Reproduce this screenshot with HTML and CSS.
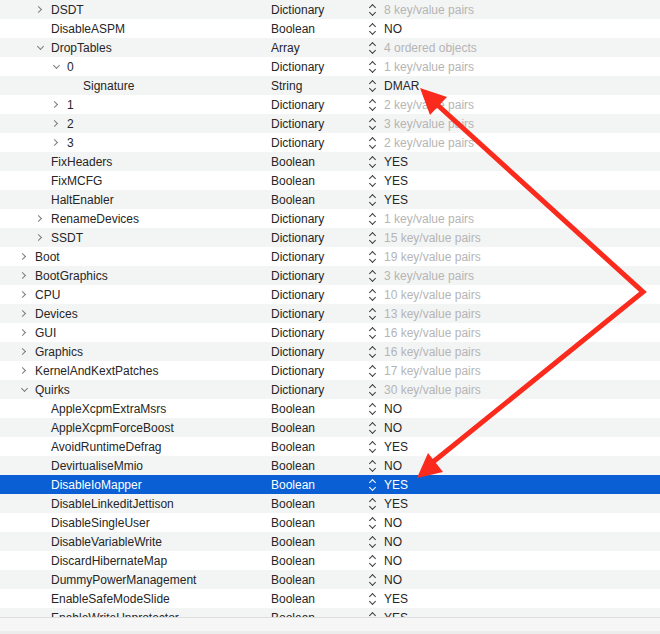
FILE: index.html
```html
<!DOCTYPE html>
<html lang="en">
<head>
  <meta charset="UTF-8" />
  <title>config.plist</title>
  <link rel="stylesheet" href="styles.css">
</head>
<body>
  <div class="editor">
    <div class="outline">
      <div class="row lvl2"><span class="key"><i class="tog closed"></i>DSDT</span><span class="type">Dictionary</span><span class="val dim"><i class="step"></i>8 key/value pairs</span></div>
      <div class="row lvl2"><span class="key"><i class="tog"></i>DisableASPM</span><span class="type">Boolean</span><span class="val"><i class="step"></i>NO</span></div>
      <div class="row lvl2"><span class="key"><i class="tog open"></i>DropTables</span><span class="type">Array</span><span class="val dim"><i class="step"></i>4 ordered objects</span></div>
      <div class="row lvl3"><span class="key"><i class="tog open"></i>0</span><span class="type">Dictionary</span><span class="val dim"><i class="step"></i>1 key/value pairs</span></div>
      <div class="row lvl4"><span class="key"><i class="tog"></i>Signature</span><span class="type">String</span><span class="val"><i class="step"></i>DMAR</span></div>
      <div class="row lvl3"><span class="key"><i class="tog closed"></i>1</span><span class="type">Dictionary</span><span class="val dim"><i class="step"></i>2 key/value pairs</span></div>
      <div class="row lvl3"><span class="key"><i class="tog closed"></i>2</span><span class="type">Dictionary</span><span class="val dim"><i class="step"></i>3 key/value pairs</span></div>
      <div class="row lvl3"><span class="key"><i class="tog closed"></i>3</span><span class="type">Dictionary</span><span class="val dim"><i class="step"></i>2 key/value pairs</span></div>
      <div class="row lvl2"><span class="key"><i class="tog"></i>FixHeaders</span><span class="type">Boolean</span><span class="val"><i class="step"></i>YES</span></div>
      <div class="row lvl2"><span class="key"><i class="tog"></i>FixMCFG</span><span class="type">Boolean</span><span class="val"><i class="step"></i>YES</span></div>
      <div class="row lvl2"><span class="key"><i class="tog"></i>HaltEnabler</span><span class="type">Boolean</span><span class="val"><i class="step"></i>YES</span></div>
      <div class="row lvl2"><span class="key"><i class="tog closed"></i>RenameDevices</span><span class="type">Dictionary</span><span class="val dim"><i class="step"></i>1 key/value pairs</span></div>
      <div class="row lvl2"><span class="key"><i class="tog closed"></i>SSDT</span><span class="type">Dictionary</span><span class="val dim"><i class="step"></i>15 key/value pairs</span></div>
      <div class="row lvl1"><span class="key"><i class="tog closed"></i>Boot</span><span class="type">Dictionary</span><span class="val dim"><i class="step"></i>19 key/value pairs</span></div>
      <div class="row lvl1"><span class="key"><i class="tog closed"></i>BootGraphics</span><span class="type">Dictionary</span><span class="val dim"><i class="step"></i>3 key/value pairs</span></div>
      <div class="row lvl1"><span class="key"><i class="tog closed"></i>CPU</span><span class="type">Dictionary</span><span class="val dim"><i class="step"></i>10 key/value pairs</span></div>
      <div class="row lvl1"><span class="key"><i class="tog closed"></i>Devices</span><span class="type">Dictionary</span><span class="val dim"><i class="step"></i>13 key/value pairs</span></div>
      <div class="row lvl1"><span class="key"><i class="tog closed"></i>GUI</span><span class="type">Dictionary</span><span class="val dim"><i class="step"></i>16 key/value pairs</span></div>
      <div class="row lvl1"><span class="key"><i class="tog closed"></i>Graphics</span><span class="type">Dictionary</span><span class="val dim"><i class="step"></i>16 key/value pairs</span></div>
      <div class="row lvl1"><span class="key"><i class="tog closed"></i>KernelAndKextPatches</span><span class="type">Dictionary</span><span class="val dim"><i class="step"></i>17 key/value pairs</span></div>
      <div class="row lvl1"><span class="key"><i class="tog open"></i>Quirks</span><span class="type">Dictionary</span><span class="val dim"><i class="step"></i>30 key/value pairs</span></div>
      <div class="row lvl2"><span class="key"><i class="tog"></i>AppleXcpmExtraMsrs</span><span class="type">Boolean</span><span class="val"><i class="step"></i>NO</span></div>
      <div class="row lvl2"><span class="key"><i class="tog"></i>AppleXcpmForceBoost</span><span class="type">Boolean</span><span class="val"><i class="step"></i>NO</span></div>
      <div class="row lvl2"><span class="key"><i class="tog"></i>AvoidRuntimeDefrag</span><span class="type">Boolean</span><span class="val"><i class="step"></i>YES</span></div>
      <div class="row lvl2"><span class="key"><i class="tog"></i>DevirtualiseMmio</span><span class="type">Boolean</span><span class="val"><i class="step"></i>NO</span></div>
      <div class="row lvl2 selected"><span class="key"><i class="tog"></i>DisableIoMapper</span><span class="type">Boolean</span><span class="val"><i class="step"></i>YES</span></div>
      <div class="row lvl2"><span class="key"><i class="tog"></i>DisableLinkeditJettison</span><span class="type">Boolean</span><span class="val"><i class="step"></i>YES</span></div>
      <div class="row lvl2"><span class="key"><i class="tog"></i>DisableSingleUser</span><span class="type">Boolean</span><span class="val"><i class="step"></i>NO</span></div>
      <div class="row lvl2"><span class="key"><i class="tog"></i>DisableVariableWrite</span><span class="type">Boolean</span><span class="val"><i class="step"></i>NO</span></div>
      <div class="row lvl2"><span class="key"><i class="tog"></i>DiscardHibernateMap</span><span class="type">Boolean</span><span class="val"><i class="step"></i>NO</span></div>
      <div class="row lvl2"><span class="key"><i class="tog"></i>DummyPowerManagement</span><span class="type">Boolean</span><span class="val"><i class="step"></i>NO</span></div>
      <div class="row lvl2"><span class="key"><i class="tog"></i>EnableSafeModeSlide</span><span class="type">Boolean</span><span class="val"><i class="step"></i>YES</span></div>
      <div class="row lvl2"><span class="key"><i class="tog"></i>EnableWriteUnprotector</span><span class="type">Boolean</span><span class="val"><i class="step"></i>YES</span></div>
    </div>
    <div class="statusbar"></div>

    <!-- annotation arrows drawn over the list -->
    <svg class="marks" width="660" height="634" viewBox="0 0 660 634">
      <polyline points="432,100 643,292 428,466" fill="none" stroke="#fa2b1d" stroke-width="5" stroke-linejoin="miter"/>
      <polygon points="420,88 447,97 430,115" fill="#fa2b1d"/>
      <polygon points="417,478 428,453 443,472" fill="#fa2b1d"/>
    </svg>
  </div>
</body>
</html>
```

FILE: styles.css
```css
body {
  margin: 0;
  font-family: "Liberation Sans", Arial, sans-serif;
  font-size: 12px;
  color: #262626;
  background-color: #ffffff;
  overflow: hidden;
}

.editor {
  position: relative;
  width: 660px;
  height: 634px;
  display: flex;
  flex-direction: column;
}

.outline {
  height: 617px;
  overflow: hidden;
}

.row {
  display: grid;
  grid-template-columns: 271px 97px 1fr;
  height: 19px;
  line-height: 18px;
  white-space: nowrap;
}

.row > span {
  padding-top: 1px;
}

.row:nth-child(odd) {
  background-color: #f3f4f4;
}

.row .key {
  display: flex;
  align-items: center;
}

.lvl1 .key { padding-left: 19px; }
.lvl2 .key { padding-left: 35px; }
.lvl3 .key { padding-left: 51px; }
.lvl4 .key { padding-left: 67px; }

.tog {
  width: 16px;
  height: 18px;
  flex: none;
  position: relative;
}

.tog.closed::before,
.tog.open::before {
  content: "";
  position: absolute;
  width: 4px;
  height: 4px;
  border-right: 1.2px solid #7c7c7c;
  border-bottom: 1.2px solid #7c7c7c;
}

.tog.closed::before {
  left: 1px;
  top: 6px;
  transform: rotate(-45deg);
}

.tog.open::before {
  left: 3px;
  top: 5px;
  transform: rotate(45deg);
}

.val {
  display: flex;
  align-items: center;
}

.val.dim {
  color: #b5b5b5;
}

.step {
  width: 8px;
  height: 18px;
  margin: 0 7px 0 1px;
  position: relative;
  flex: none;
}

.step::before,
.step::after {
  content: "";
  position: absolute;
  left: 1px;
  width: 4px;
  height: 4px;
  border-left: 1.6px solid #3c3c3c;
  border-top: 1.6px solid #3c3c3c;
}

.step::before {
  top: 4px;
  transform: rotate(45deg);
}

.step::after {
  top: 9px;
  transform: rotate(-135deg);
}

.row.selected {
  background-color: #0a5fd4;
  color: #ffffff;
}

.row.selected .step::before,
.row.selected .step::after {
  border-color: #ffffff;
}

.statusbar {
  flex: 1;
  background-color: #f6f6f6;
  border-top: 1px solid #dedede;
  border-bottom: 3px solid #ececec;
}

.marks {
  position: absolute;
  top: 0;
  left: 0;
  pointer-events: none;
}
```
